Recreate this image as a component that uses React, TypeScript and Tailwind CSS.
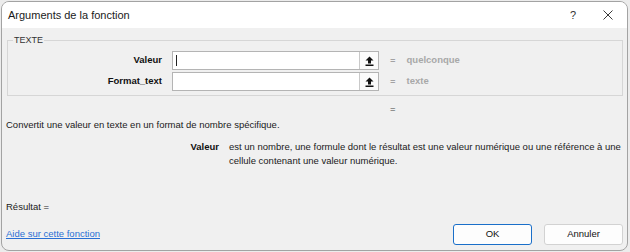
import React from "react";

function PickIcon() {
  return (
    <svg width="9" height="10" viewBox="0 0 9 10" fill="#111">
      <path d="M4.5 0.5 L8.5 4.5 L6 4.5 L6 7.5 L3 7.5 L3 4.5 L0.5 4.5 Z" />
      <rect x="0.5" y="8.5" width="8" height="1.5" />
    </svg>
  );
}

function ArgRow({ label, value, cursor }: { label: string; value: string; cursor?: boolean }) {
  return (
    <div className="flex h-[19px] items-center">
      <div className="w-[154px] text-right text-[9.5px] font-bold text-[#111]">{label}</div>
      <div className="ml-[10px] flex h-[19px] w-[207px] items-stretch border border-[#b4b4b4] bg-white">
        <div className="flex flex-1 items-center pl-[3px]">
          {cursor && <div className="h-[11px] w-[1px] bg-[#222]" />}
        </div>
        <div className="flex w-[19px] items-center justify-center border-l border-[#c9c9c9] bg-[#fbfbfb]">
          <PickIcon />
        </div>
      </div>
      <div className="ml-[11px] text-[9.5px] text-[#666]">=</div>
      <div className="ml-[11px] text-[9.5px] font-bold text-[#a8a8a8]">{value}</div>
    </div>
  );
}

export default function App() {
  return (
    <div className="h-[252px] w-[630px] bg-[#ececec] pl-[1px] pt-[1px] font-['Liberation_Sans',Arial,sans-serif]">
      <div className="flex h-[250px] w-[627px] flex-col overflow-hidden rounded-[8px] border border-[#a3a3a3] bg-[#f0f0f0]">
        {/* Title bar */}
        <div className="flex h-[26px] shrink-0 items-center bg-white pl-[6px]">
          <span className="text-[11px] text-[#1a1a1a]">Arguments de la fonction</span>
          <span className="ml-auto mr-[27px] text-[11px] text-[#333]">?</span>
          <svg width="10" height="10" viewBox="0 0 10 10" className="mr-[14px]" stroke="#222" strokeWidth="0.9">
            <path d="M0.5 0.5 L9.5 9.5 M9.5 0.5 L0.5 9.5" />
          </svg>
        </div>

        {/* Body */}
        <div className="flex flex-1 flex-col px-[4px]">
          <fieldset className="ml-[1px] mt-[7px] border border-[#d6d6d6] pb-[4px] pt-[5px]">
            <legend className="ml-[5px] px-[1px] text-[9px] leading-[11px] text-[#333]">TEXTE</legend>
            <div className="flex flex-col gap-[2px]">
              <ArgRow label="Valeur" value="quelconque" cursor />
              <ArgRow label="Format_text" value="texte" />
            </div>
          </fieldset>

          <div className="ml-[384px] mt-[7px] text-[9.5px] leading-[12px] text-[#444]">=</div>

          <p className="mt-[4px] text-[9.5px] leading-[12px] text-[#1a1a1a]">
            Convertit une valeur en texte en un format de nombre spécifique.
          </p>

          <div className="mt-[9px] flex">
            <div className="w-[213px] shrink-0 text-right text-[9.5px] font-bold leading-[14px] text-[#111]">Valeur</div>
            <p className="ml-[10px] w-[394px] text-[9.5px] leading-[14px] text-[#1a1a1a]">
              est un nombre, une formule dont le résultat est une valeur numérique ou une référence à une cellule contenant une valeur numérique.
            </p>
          </div>

          <div className="mt-auto pb-[5px]">
            <div className="mb-[11px] text-[9.5px] leading-[12px] text-[#1a1a1a]">Résultat =</div>
            <div className="flex items-center">
              <a href="#" className="text-[9.5px] text-[#2a6fd4] underline">
                Aide sur cette fonction
              </a>
              <button
                type="button"
                className="ml-auto h-[21px] w-[79px] rounded-[3px] border border-[#1a6fc9] bg-[#fdfdfd] text-[9.5px] text-[#111]"
              >
                OK
              </button>
              <button
                type="button"
                className="ml-[12px] h-[21px] w-[79px] rounded-[3px] border border-[#d2d2d2] bg-[#fdfdfd] text-[9.5px] text-[#111]"
              >
                Annuler
              </button>
            </div>
          </div>
        </div>
      </div>
    </div>
  );
}
